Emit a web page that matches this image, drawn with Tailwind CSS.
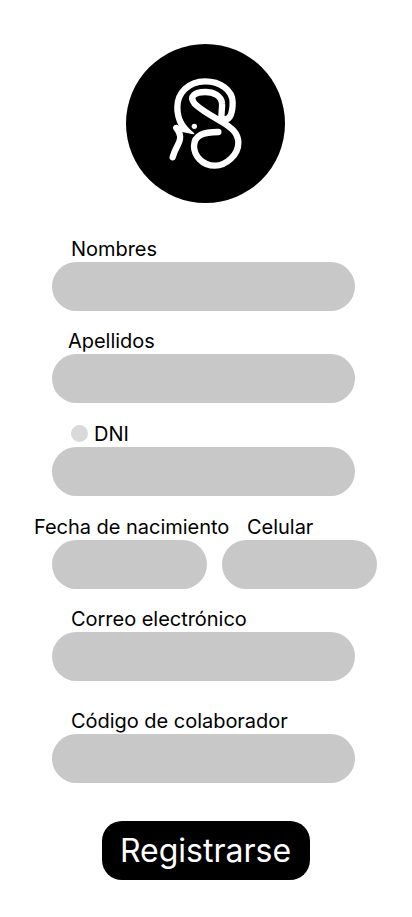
<!DOCTYPE html>
<html lang="es">
<head>
<meta charset="utf-8">
<meta name="viewport" content="width=device-width, initial-scale=1">
<title>Registrarse</title>
<script src="https://cdn.jsdelivr.net/npm/@tailwindcss/browser@4"></script>
</head>
<body class="bg-white">
<main class="flex h-[917px] w-[412px] flex-col overflow-hidden bg-white pt-[44px] font-['Inter',sans-serif] text-[20px] font-normal leading-[24px] tracking-[-0.03px] text-black">
  <div class="ml-[126px] size-[159px] shrink-0 rounded-full bg-black">
    <svg class="size-full" viewBox="-102 -78 477 477" fill="none" stroke="#fff" stroke-width="19" stroke-linecap="round" stroke-linejoin="round">
      <path d="M190 147C212 153 218 125 218 97C218 60 180 34 135 34C85 34 52 70 52 112C52 135 57 150 65 164"/>
      <path d="M49 174C57 184 62 195 60 207C58 224 45 234 38 262"/>
      <path d="M60 130C67 155 82 172 103 190Q104 193 100 193L62 185L42 176Q38 166 48 165L61 169L43 120Z" fill="#fff" stroke="none"/>
      <path d="M185 147C182 130 188 115 186 100C184 78 162 66 135 66C105 66 86 79 104 101C116 113 150 135 180 152C215 172 235 190 235 218C235 255 198 287 165 287C125 287 102 255 102 228C103 195 130 186 175 186"/>
      <circle cx="103" cy="169" r="8" fill="#fff" stroke="none"/>
    </svg>
  </div>
  <form class="flex flex-col">
    <div class="mt-[34px] flex flex-col pl-[52px]">
      <label for="nombres" class="h-[25px] pl-[19px]">Nombres</label>
      <input id="nombres" class="h-[49px] w-[303px] rounded-full bg-[#c8c8c8] px-5">
    </div>
    <div class="mt-[18px] flex flex-col pl-[52px]">
      <label for="apellidos" class="h-[25px] pl-[16px]">Apellidos</label>
      <input id="apellidos" class="h-[49px] w-[303px] rounded-full bg-[#c8c8c8] px-5">
    </div>
    <div class="mt-[19px] flex flex-col pl-[52px]">
      <label for="dni" class="flex h-[25px] gap-[6px] pl-[19px]"><span class="mt-[3px] size-[17px] rounded-full bg-[#d9d9d9]"></span>DNI</label>
      <input id="dni" class="h-[49px] w-[303px] rounded-full bg-[#c8c8c8] px-5">
    </div>
    <div class="mt-[19px] flex">
      <div class="flex w-[222px] flex-col">
        <label for="fecha" class="h-[25px] whitespace-nowrap pl-[34px]">Fecha de nacimiento</label>
        <input id="fecha" class="ml-[52px] h-[49px] w-[155px] rounded-full bg-[#c8c8c8] px-5">
      </div>
      <div class="flex flex-col">
        <label for="celular" class="h-[25px] pl-[25px]">Celular</label>
        <input id="celular" class="h-[49px] w-[155px] rounded-full bg-[#c8c8c8] px-5">
      </div>
    </div>
    <div class="mt-[18px] flex flex-col pl-[52px]">
      <label for="correo" class="h-[25px] pl-[19px]">Correo electrónico</label>
      <input id="correo" class="h-[49px] w-[303px] rounded-full bg-[#c8c8c8] px-5">
    </div>
    <div class="mt-[28px] flex flex-col pl-[52px]">
      <label for="codigo" class="h-[25px] pl-[19px]">Código de colaborador</label>
      <input id="codigo" class="h-[49px] w-[303px] rounded-full bg-[#c8c8c8] px-5">
    </div>
    <button type="button" class="ml-[102px] mt-[38px] h-[59px] w-[208px] rounded-[20px] bg-black pr-px text-[32px] leading-[39px] tracking-normal text-white">Registrarse</button>
  </form>
</main>
</body>
</html>
